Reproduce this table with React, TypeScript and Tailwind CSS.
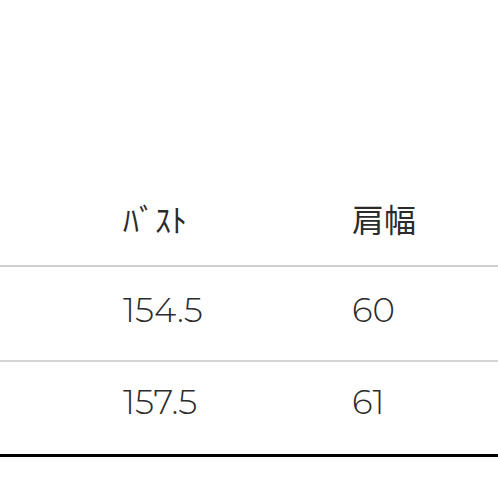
export default function App() {
  const num = "font-['Montserrat','Lato','Noto_Sans',sans-serif] text-[34px] font-light text-[#2b2b2b]";
  return (
    <div className="w-[498px] h-[498px] bg-white overflow-hidden">
      <div className="h-[180px]" />
      <div className="flex items-center h-[87px] pb-[9px] border-b-2 border-[#cfcfcf] pl-[123px] text-[32px] text-[#2b2b2b] font-['Noto_Sans_CJK_JP',sans-serif] leading-none">
        <div className="w-[229px]">ﾊﾞｽﾄ</div>
        <div>肩幅</div>
      </div>
      <div className={"flex items-center h-[95px] pb-[8px] border-b-2 border-[#d4d4d4] pl-[123px] leading-none " + num}>
        <div className="w-[229px]">154.5</div>
        <div>60</div>
      </div>
      <div className={"flex items-center h-[95px] pb-[13px] border-b-[3px] border-black pl-[123px] leading-none " + num}>
        <div className="w-[229px]">157.5</div>
        <div>61</div>
      </div>
    </div>
  );
}
